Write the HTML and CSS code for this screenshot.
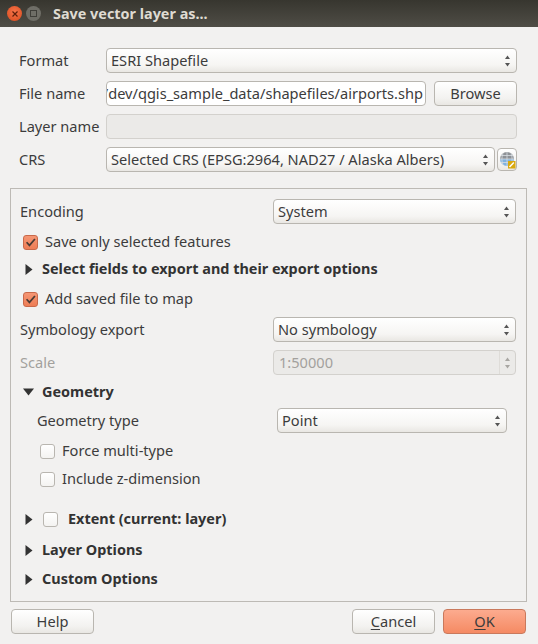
FILE: index.html
```html
<!DOCTYPE html>
<html lang="en">
<head>
  <meta charset="UTF-8">
  <title>Save vector layer as...</title>
  <link rel="stylesheet" href="styles.css">
</head>
<body>
  <svg class="defs" width="0" height="0">
    <symbol id="updown" viewBox="0 0 7 14"><path d="M3.5 1.500 6 5H1z"/><path d="M1 9h5l-2.500 3.500z"/></symbol>
    <symbol id="tick" viewBox="0 0 15 15"><path d="M3 7.2 6.3 10.8 12.6 3.4" fill="none" stroke="#4a3b34" stroke-width="2"/></symbol>
    <symbol id="right" viewBox="0 0 8 11"><path d="M.5 0 7.5 5.5.5 11z"/></symbol>
    <symbol id="down" viewBox="0 0 11 8"><path d="M0 .5h11L5.500 7.500z"/></symbol>
  </svg>

  <header class="titlebar">
    <span class="win-btn win-close">
      <svg width="8" height="8" viewBox="0 0 8 8"><path d="M1.500 1.500 6.500 6.500M6.500 1.500 1.500 6.500" stroke="#5e1f0a" stroke-width="1.200"/></svg>
    </span>
    <span class="win-btn win-max"><i></i></span>
    <h1>Save vector layer as...</h1>
  </header>

  <form class="top-form">
    <div class="form-row">
      <label>Format</label>
      <div class="combo fill"><span>ESRI Shapefile</span><svg class="updown"><use href="#updown"/></svg></div>
    </div>
    <div class="form-row">
      <label>File name</label>
      <div class="line-edit fill"><span>/dev/qgis_sample_data/shapefiles/airports.shp</span></div>
      <button type="button" class="btn browse">Browse</button>
    </div>
    <div class="form-row">
      <label>Layer name</label>
      <div class="line-edit fill disabled"></div>
    </div>
    <div class="form-row">
      <label>CRS</label>
      <div class="combo fill"><span>Selected CRS (EPSG:2964, NAD27 / Alaska Albers)</span><svg class="updown"><use href="#updown"/></svg></div>
      <button type="button" class="btn crs-btn">
        <svg width="18" height="18" viewBox="0 0 18 18">
          <path d="M2 8a7 7 0 0 1 14 0z" fill="#8d9196"/>
          <path d="M2 8a7 7 0 0 0 14 0z" fill="#7fb2e0"/>
          <path d="M2 8h14M9 1v14M5 2.500c-1.500 3.500-1.500 8 0 11.500M13 2.500c1.500 3.500 1.500 8 0 11.500M3 4.500h12M3 11.500h12" fill="none" stroke="#d8dde2" stroke-width=".8"/>
          <rect x="10" y="10" width="7.500" height="7.500" fill="#d9a90f"/>
          <path d="M11.500 16 15.800 11.500" stroke="#fff" stroke-width="1.500"/>
        </svg>
      </button>
    </div>
  </form>

  <section class="panel">
    <div class="row">
      <label>Encoding</label>
      <div class="combo field"><span>System</span><svg class="updown"><use href="#updown"/></svg></div>
    </div>
    <div class="check-row mt-8"><span class="check on"><svg><use href="#tick"/></svg></span><span class="lift">Save only selected features</span></div>
    <div class="group-row mt-7"><svg class="arrow"><use href="#right"/></svg><b>Select fields to export and their export options</b></div>
    <div class="check-row mt-10"><span class="check on"><svg><use href="#tick"/></svg></span><span class="lift">Add saved file to map</span></div>
    <div class="row mt-8">
      <label>Symbology export</label>
      <div class="combo field"><span>No symbology</span><svg class="updown"><use href="#updown"/></svg></div>
    </div>
    <div class="row mt-8">
      <label class="muted">Scale</label>
      <div class="spin field"><span>1:50000</span><div class="spin-arrows"><svg class="updown"><use href="#updown"/></svg></div></div>
    </div>
    <div class="group-row mt-7"><svg class="arrow-down"><use href="#down"/></svg><b>Geometry</b></div>
    <div class="row sub mt-6">
      <label>Geometry type</label>
      <div class="combo geom-field"><span>Point</span><svg class="updown"><use href="#updown"/></svg></div>
    </div>
    <div class="check-row sub-check mt-8"><span class="check"></span><span class="lift">Force multi-type</span></div>
    <div class="check-row sub-check mt-8"><span class="check"></span><span class="lift">Include z-dimension</span></div>
    <div class="group-row extent mt-20"><svg class="arrow"><use href="#right"/></svg><span class="check"></span><b>Extent (current: layer)</b></div>
    <div class="group-row mt-11"><svg class="arrow"><use href="#right"/></svg><b>Layer Options</b></div>
    <div class="group-row mt-9"><svg class="arrow"><use href="#right"/></svg><b>Custom Options</b></div>
  </section>

  <footer class="button-box">
    <button type="button" class="btn">Help</button>
    <span class="spacer"></span>
    <button type="button" class="btn"><u>C</u>ancel</button>
    <button type="button" class="btn btn-ok"><u>O</u>K</button>
  </footer>
</body>
</html>
```

FILE: styles.css
```css
* {
  box-sizing: border-box;
}

html,
body {
  height: 100%;
}

body {
  margin: 0;
  background: #f2f1f0;
  color: #3c3c3c;
  font-family: "Noto Sans", sans-serif;
  font-size: 14.6px;
  overflow: hidden;
}

.defs {
  position: absolute;
}

.titlebar {
  display: flex;
  align-items: center;
  height: 27px;
  padding-left: 7px;
  background: linear-gradient(#37362f, #4f4d46);
}

.titlebar h1 {
  margin: 0 0 0 12px;
  color: #dfdbd2;
  font-size: 14.4px;
  font-weight: 700;
}

.win-btn {
  display: flex;
  align-items: center;
  justify-content: center;
  width: 15px;
  height: 15px;
  border-radius: 50%;
}

.win-close {
  background: radial-gradient(circle at 50% 40%, #f6744a, #d84a1c);
}

.win-max {
  margin-left: 4px;
  background: #6f6e67;
}

.win-max i {
  width: 7px;
  height: 7px;
  border: 1px solid #3f3e39;
}

.top-form {
  display: flex;
  flex-direction: column;
  gap: 8px;
  padding: 21px 21px 0 19px;
}

.form-row {
  display: flex;
  align-items: center;
  height: 25px;
}

.form-row label {
  width: 87px;
}

.form-row label,
.row label,
.combo span,
.spin span,
.line-edit span,
.lift {
  padding-bottom: 2px;
}

.fill {
  flex: 1;
  min-width: 0;
}

.combo,
.spin,
.line-edit {
  display: flex;
  align-items: center;
  height: 25px;
  border: 1px solid #b9b6b0;
  border-radius: 4px;
}

.combo {
  justify-content: space-between;
  padding: 0 5px 0 4px;
  background: linear-gradient(#fff, #f6f5f3 70%, #e9e7e3);
  white-space: nowrap;
}

.updown {
  width: 7px;
  height: 14px;
  fill: #555;
}

.line-edit {
  justify-content: flex-end;
  padding-right: 2px;
  overflow: hidden;
  background: #fff;
  white-space: nowrap;
}

.line-edit.disabled {
  background: #ebeae8;
  border-color: #d3d1cd;
}

.btn {
  width: 83px;
  height: 25px;
  padding: 0 0 2px;
  border: 1px solid #b9b6b0;
  border-radius: 4px;
  background: linear-gradient(#fff, #f3f2f0 70%, #e9e7e3);
  color: #3c3c3c;
  font: inherit;
}

.browse {
  flex: none;
  margin-left: 8px;
}

.crs-btn {
  display: flex;
  align-items: center;
  justify-content: center;
  flex: none;
  width: 20px;
  height: 23px;
  margin-left: 2px;
  padding: 0;
}

.panel {
  display: flex;
  flex-direction: column;
  width: 517px;
  height: 414px;
  margin: 16px 0 0 10px;
  padding: 10px 10px 0 9px;
  border: 1px solid #bdbab5;
}

.row {
  display: flex;
  align-items: center;
  justify-content: space-between;
  height: 25px;
}

.field {
  width: 243px;
}

.geom-field {
  width: 230px;
}

.sub {
  padding: 0 9px 0 17px;
}

.muted {
  color: #a3a19d;
}

.spin {
  justify-content: space-between;
  padding-left: 5px;
  background: #ebeae8;
  border-color: #d3d1cd;
  color: #a3a19d;
}

.spin-arrows {
  display: flex;
  align-items: center;
  justify-content: center;
  width: 16px;
  height: 100%;
  border-left: 1px solid #dedcd8;
}

.spin-arrows .updown {
  fill: #a8a6a2;
}

.check-row {
  display: flex;
  align-items: center;
  height: 20px;
  padding-left: 3px;
}

.sub-check {
  padding-left: 20px;
}

.check {
  flex: none;
  width: 15px;
  height: 15px;
  margin-right: 7px;
  border: 1px solid #b9b6b0;
  border-radius: 3px;
  background: linear-gradient(#fff, #f4f3f1);
}

.check.on {
  border-color: #c9694a;
  background: linear-gradient(#f59674, #ee7d55);
}

.check svg {
  display: block;
  width: 13px;
  height: 13px;
}

.group-row {
  display: flex;
  align-items: center;
  height: 20px;
  padding-left: 5px;
}

.group-row b {
  padding-bottom: 2px;
  color: #333;
  font-size: 14.45px;
}

.arrow {
  flex: none;
  width: 8px;
  height: 11px;
  margin-right: 9px;
  fill: #333;
}

.arrow-down {
  flex: none;
  width: 11px;
  height: 8px;
  margin: 0 8px 0 -2px;
  fill: #333;
}

.extent .arrow {
  margin-right: 10px;
}

.extent .check {
  margin-right: 10px;
}

.mt-6 { margin-top: 6px; }
.mt-7 { margin-top: 7px; }
.mt-8 { margin-top: 8px; }
.mt-9 { margin-top: 9px; }
.mt-10 { margin-top: 10px; }
.mt-11 { margin-top: 11px; }
.mt-20 { margin-top: 20px; }

.button-box {
  display: flex;
  gap: 8px;
  margin-top: 7px;
  padding: 0 12px 0 11px;
}

.spacer {
  flex: 1;
}

.btn-ok {
  border-color: #c9795c;
  background: linear-gradient(#fcab8f, #f58a63);
}

u {
  text-underline-offset: 2px;
}
```
